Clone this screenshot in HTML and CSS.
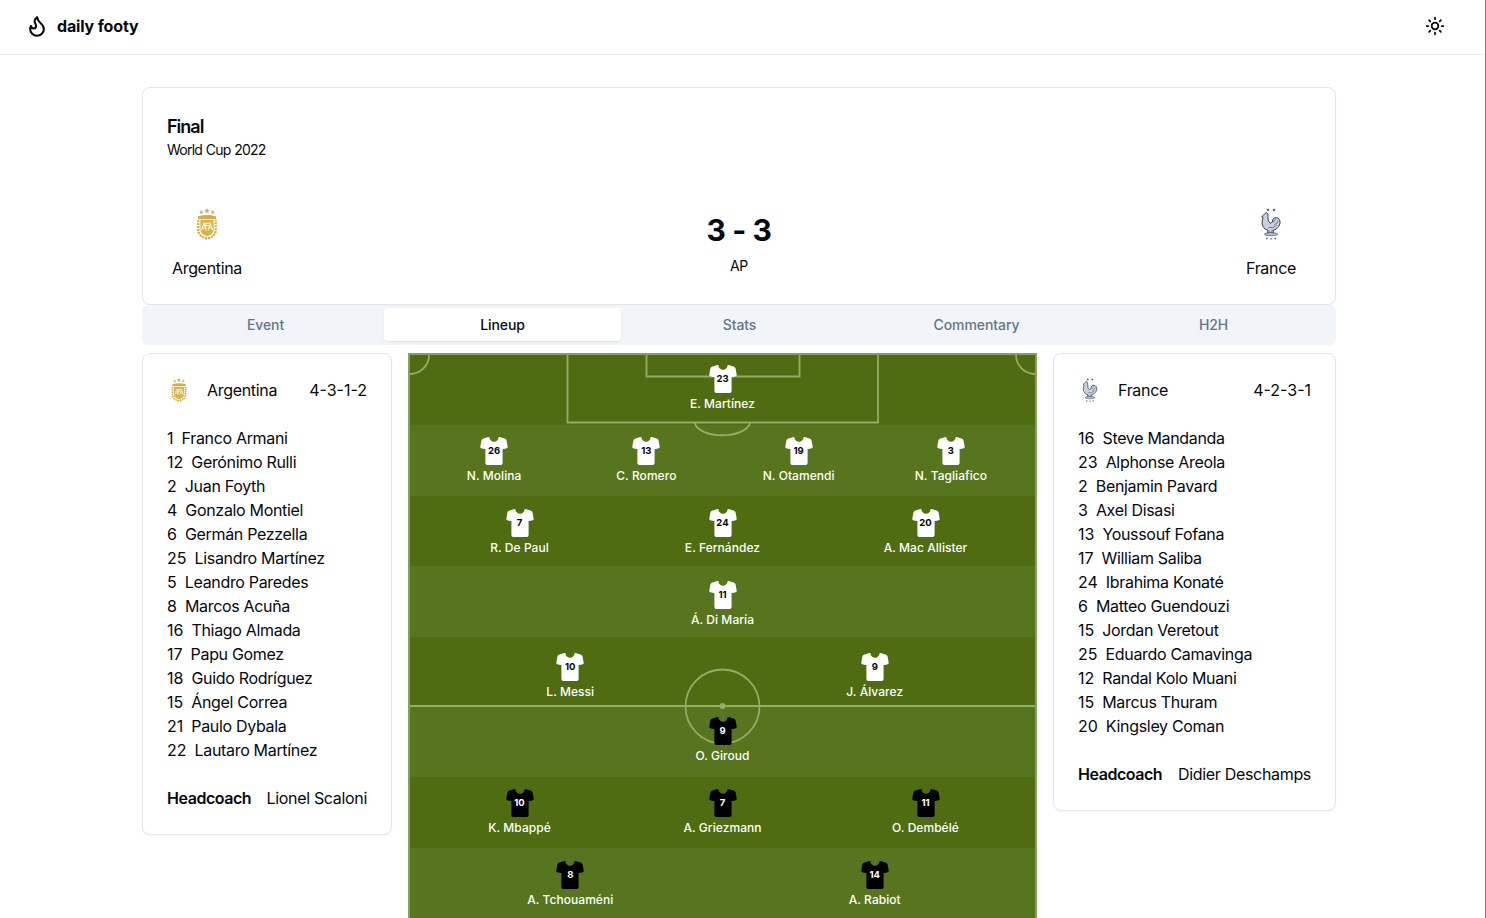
FILE: index.html
```html
<!DOCTYPE html>
<html lang="en">
<head>
<meta charset="utf-8">
<title>daily footy</title>
<link rel="stylesheet" href="styles.css">
</head>
<body>
<svg class="sprite" width="0" height="0">
  <symbol id="shirt" viewBox="0 0 28 28">
    <path d="M7.6 0.3 9.300 0C9.600 1.700 9.800 2.400 10.900 3.500 12.600 5.200 15.400 5.200 17.100 3.500 18.200 2.400 18.400 1.700 18.700 0L20.400 0.300 25.200 1.800Q26.200 2.200 26.600 3.600L27.700 9.800Q27.800 10.900 26.800 11.200L23.600 12.100 22.600 11.700V26Q22.600 28 20.600 28H7.400Q5.400 28 5.400 26V11.700L4.400 12.100 1.200 11.200Q0.200 10.900 0.300 9.800L1.400 3.600Q1.800 2.200 2.800 1.800Z"/>
  </symbol>
  <symbol id="afa" viewBox="0 0 32 32">
    <g fill="#d3ad45">
      <path d="M16 0l.8 1.7 1.9.2-1.4 1.3.4 1.9L16 4.2l-1.7.9.4-1.9-1.4-1.3 1.9-.2zM10.3 2l.6 1.3 1.5.2-1.1 1 .3 1.5-1.3-.7L9 6l.3-1.5-1.1-1 1.5-.2zM21.7 2l.6 1.3 1.5.2-1.1 1 .3 1.5-1.3-.7-1.3.7.3-1.5-1.1-1 1.5-.2z"/>
      <path d="M7 8.2Q16 5.6 25 8.2V11H7z"/>
    </g>
    <path d="M7.3 12V23Q8 28.4 16 30.6 24 28.4 24.7 23V12" fill="none" stroke="#d3ad45" stroke-width="2.3" stroke-dasharray="2.1 .9"/>
    <path d="M9.4 12H22.6V22.5Q22 26.5 16 28.2 10 26.5 9.4 22.5Z" fill="#d8b24b"/>
    <path d="M10.4 22.3 13 15.2 15.2 22.3M11.4 20H14.6M14.8 15V19.8M14.8 15.2H18.6M15 17.5H17.5M17 22.3 19.2 15.2 21.6 22.3M18 20H21" fill="none" stroke="#fff8df" stroke-width="1.1"/>
  </symbol>
  <symbol id="fff" viewBox="0 0 32 32">
    <path d="M13 .2l.5 1 1.1.1-.8.8.2 1.1-1-.5-1 .5.2-1.1-.8-.8 1.1-.1zM19 .2l.5 1 1.1.1-.8.8.2 1.1-1-.5-1 .5.2-1.1-.8-.8 1.1-.1z" fill="#36457a"/>
    <path d="M9.6 5.8 8.3 7.4 6.7 8.7 8.2 9.6 7.4 12.2Q6.4 15 7.8 18.2 9.7 21.8 13 22.3L12.4 25.2H18.6L17.9 22.4Q21.8 21.5 23.8 18.4 26 14.8 24.7 12 23 8.9 19.8 9.7 17 10.7 17.4 14L15.2 15.4Q12.6 13.2 13 9.5L12.8 6.2 11.4 4.4Z" fill="#cbd1dc" stroke="#34415f" stroke-width="1"/>
    <path d="M18.2 14.7Q18.6 11.8 21 11.5M19.4 16.7Q22.5 15.5 23 12.8M13.4 19.6Q18.5 20.800 21.8 17M14.2 22.6V25M16.8 22.6V25" fill="none" stroke="#66728d" stroke-width=".9"/>
    <ellipse cx="16" cy="26.2" rx="6.8" ry="1.5" fill="#b7c0cd" stroke="#4b5870" stroke-width=".7"/>
    <path d="M11 30.500h1.500M15.300 30.900H16.800M19.500 30.500h1.500" stroke="#536083" stroke-width="1.4"/>
  </symbol>
</svg>

<header class="topbar">
  <a class="brand">
    <svg class="flame" viewBox="0 0 24 24"><path d="M8.5 14.5A2.5 2.5 0 0 0 11 12c0-1.38-.5-2-1-3-1.072-2.143-.224-4.054 2-6 .5 2.5 2 4.9 4 6.5 2 1.6 3 3.5 3 5.5a7 7 0 1 1-14 0c0-1.153.433-2.294 1-3a2.5 2.5 0 0 0 2.5 2.5z"/></svg>
    <span>daily footy</span>
  </a>
  <svg class="sun" viewBox="0 0 24 24"><circle cx="12" cy="12" r="4"/><path d="M12 2v2M12 20v2M4.93 4.93l1.41 1.41M17.66 17.66l1.41 1.41M2 12h2M20 12h2M6.34 17.66l-1.41 1.41M19.07 4.93l-1.41 1.41"/></svg>
</header>

<main class="page">
  <section class="card match">
    <h1 class="round">Final</h1>
    <p class="league">World Cup 2022</p>
    <div class="scoreline">
      <div class="team"><svg class="crest"><use href="#afa"/></svg><span>Argentina</span></div>
      <div class="result"><strong class="score">3 - 3</strong><span class="status">AP</span></div>
      <div class="team"><svg class="crest"><use href="#fff"/></svg><span>France</span></div>
    </div>
  </section>

  <nav class="tabs">
    <a class="tab">Event</a><a class="tab active">Lineup</a><a class="tab">Stats</a><a class="tab">Commentary</a><a class="tab">H2H</a>
  </nav>

  <div class="columns">
    <aside class="card squad">
      <div class="squad-head"><svg class="mini"><use href="#afa"/></svg><span>Argentina</span><span class="formation">4-3-1-2</span></div>
      <ul class="bench">
        <li><span>1</span><span>Franco Armani</span></li>
        <li><span>12</span><span>Gerónimo Rulli</span></li>
        <li><span>2</span><span>Juan Foyth</span></li>
        <li><span>4</span><span>Gonzalo Montiel</span></li>
        <li><span>6</span><span>Germán Pezzella</span></li>
        <li><span>25</span><span>Lisandro Martínez</span></li>
        <li><span>5</span><span>Leandro Paredes</span></li>
        <li><span>8</span><span>Marcos Acuña</span></li>
        <li><span>16</span><span>Thiago Almada</span></li>
        <li><span>17</span><span>Papu Gomez</span></li>
        <li><span>18</span><span>Guido Rodríguez</span></li>
        <li><span>15</span><span>Ángel Correa</span></li>
        <li><span>21</span><span>Paulo Dybala</span></li>
        <li><span>22</span><span>Lautaro Martínez</span></li>
      </ul>
      <div class="coach"><b>Headcoach</b><span>Lionel Scaloni</span></div>
    </aside>

    <section class="pitch">
      <svg class="markings" viewBox="0 0 625 704">
        <path d="M157.500 0V67.500H468V0M236.500 0V21.500H389.500V0M284.500 67.500C289 84.500 335 84.500 340.500 67.500M0 19A19 19 0 0 0 19 0M606 0A19 19 0 0 0 625 19M0 351H625"/>
        <circle cx="312.500" cy="351.500" r="37"/>
        <circle class="spot" cx="312.500" cy="351" r="3"/>
      </svg>
      <div class="half light-kit">
        <div class="line">
          <div class="player"><div class="kit"><svg><use href="#shirt"/></svg><b>23</b></div><span>E. Martínez</span></div>
        </div>
        <div class="line">
          <div class="player"><div class="kit"><svg><use href="#shirt"/></svg><b>26</b></div><span>N. Molina</span></div>
          <div class="player"><div class="kit"><svg><use href="#shirt"/></svg><b>13</b></div><span>C. Romero</span></div>
          <div class="player"><div class="kit"><svg><use href="#shirt"/></svg><b>19</b></div><span>N. Otamendi</span></div>
          <div class="player"><div class="kit"><svg><use href="#shirt"/></svg><b>3</b></div><span>N. Tagliafico</span></div>
        </div>
        <div class="line">
          <div class="player"><div class="kit"><svg><use href="#shirt"/></svg><b>7</b></div><span>R. De Paul</span></div>
          <div class="player"><div class="kit"><svg><use href="#shirt"/></svg><b>24</b></div><span>E. Fernández</span></div>
          <div class="player"><div class="kit"><svg><use href="#shirt"/></svg><b>20</b></div><span>A. Mac Allister</span></div>
        </div>
        <div class="line">
          <div class="player"><div class="kit"><svg><use href="#shirt"/></svg><b>11</b></div><span>Á. Di María</span></div>
        </div>
        <div class="line">
          <div class="player"><div class="kit"><svg><use href="#shirt"/></svg><b>10</b></div><span>L. Messi</span></div>
          <div class="player"><div class="kit"><svg><use href="#shirt"/></svg><b>9</b></div><span>J. Álvarez</span></div>
        </div>
      </div>
      <div class="half dark-kit">
        <div class="line">
          <div class="player"><div class="kit"><svg><use href="#shirt"/></svg><b>9</b></div><span>O. Giroud</span></div>
        </div>
        <div class="line">
          <div class="player"><div class="kit"><svg><use href="#shirt"/></svg><b>10</b></div><span>K. Mbappé</span></div>
          <div class="player"><div class="kit"><svg><use href="#shirt"/></svg><b>7</b></div><span>A. Griezmann</span></div>
          <div class="player"><div class="kit"><svg><use href="#shirt"/></svg><b>11</b></div><span>O. Dembélé</span></div>
        </div>
        <div class="line">
          <div class="player"><div class="kit"><svg><use href="#shirt"/></svg><b>8</b></div><span>A. Tchouaméni</span></div>
          <div class="player"><div class="kit"><svg><use href="#shirt"/></svg><b>14</b></div><span>A. Rabiot</span></div>
        </div>
      </div>
    </section>

    <aside class="card squad">
      <div class="squad-head"><svg class="mini"><use href="#fff"/></svg><span>France</span><span class="formation">4-2-3-1</span></div>
      <ul class="bench">
        <li><span>16</span><span>Steve Mandanda</span></li>
        <li><span>23</span><span>Alphonse Areola</span></li>
        <li><span>2</span><span>Benjamin Pavard</span></li>
        <li><span>3</span><span>Axel Disasi</span></li>
        <li><span>13</span><span>Youssouf Fofana</span></li>
        <li><span>17</span><span>William Saliba</span></li>
        <li><span>24</span><span>Ibrahima Konaté</span></li>
        <li><span>6</span><span>Matteo Guendouzi</span></li>
        <li><span>15</span><span>Jordan Veretout</span></li>
        <li><span>25</span><span>Eduardo Camavinga</span></li>
        <li><span>12</span><span>Randal Kolo Muani</span></li>
        <li><span>15</span><span>Marcus Thuram</span></li>
        <li><span>20</span><span>Kingsley Coman</span></li>
      </ul>
      <div class="coach"><b>Headcoach</b><span>Didier Deschamps</span></div>
    </aside>
  </div>
</main>
</body>
</html>
```

FILE: styles.css
```css
* { box-sizing: border-box; }

body {
  margin: 0;
  height: 918px;
  overflow: hidden;
  border-right: 1px solid #77777e;
  background: #fff;
  color: #06080f;
  font: 16px/24px Inter, "Liberation Sans", sans-serif;
  letter-spacing: -0.32px;
}

.sprite { display: block; }

.topbar {
  height: 55px;
  padding: 0 40px 2px 26px;
  display: flex;
  align-items: center;
  justify-content: space-between;
  border-bottom: 1px solid #e9ecef;
}

.brand { display: flex; align-items: center; gap: 9px; font-weight: 700; letter-spacing: -0.15px; }
.flame, .sun { fill: none; stroke: currentColor; stroke-width: 2.1; stroke-linecap: round; stroke-linejoin: round; }
.flame { width: 22px; height: 26px; }
.flame path { transform: scale(1.07); transform-origin: 12px 12px; }
.sun { width: 20px; height: 20px; }

.page { width: 1194px; margin: 32px 0 0 142px; }

.card {
  border: 1px solid #e2e5ea;
  border-radius: 8px;
  background: #fff;
  box-shadow: 0 1px 2px rgba(0, 0, 0, 0.04);
}

.match { height: 218px; padding: 24px; }
.round { margin: 3px 0 0; font-size: 18px; line-height: 24px; font-weight: 600; letter-spacing: -1px; }
.league { margin: 1px 0 0; font-size: 14px; line-height: 20px; letter-spacing: -0.77px; word-spacing: 0.5px; }

.scoreline { display: grid; grid-template-columns: 80px 1fr 80px; margin-top: 48px; }
.team { display: flex; flex-direction: column; align-items: center; gap: 16px; }
.crest { width: 32px; height: 32px; }
.result { display: flex; flex-direction: column; align-items: center; }
.score { font-size: 30px; line-height: 36px; font-weight: 700; letter-spacing: -0.4px; margin-top: 4px; }
.status { font-size: 14px; line-height: 20px; margin-top: 8px; }

.tabs {
  height: 40px;
  padding: 3px 4px 4px 5px;
  display: grid;
  grid-template-columns: repeat(5, 1fr);
  border-radius: 6px;
  background: #f1f5f9;
}
.tab { display: grid; place-items: center; color: #64748b; font-size: 14px; font-weight: 500; letter-spacing: -0.08px; }
.active { background: #fff; color: #06080f; border-radius: 4px; box-shadow: 0 1px 2px rgba(0, 0, 0, 0.08); }

.columns { display: grid; grid-template-columns: 250px 629px 283px; gap: 16px; align-items: start; margin-top: 8px; }

.squad { display: flex; flex-direction: column; gap: 24px; padding: 24px; }
.squad-head { display: flex; align-items: center; gap: 16px; }
.mini { width: 24px; height: 24px; }
.formation { margin-left: auto; letter-spacing: 0; }
.bench { list-style: none; margin: 0; padding: 0; }
.bench li, .coach { display: flex; gap: 8px; }
.bench li span:first-child { letter-spacing: 0; }
.coach { justify-content: space-between; white-space: nowrap; }
.coach b { font-weight: 600; letter-spacing: -0.45px; }

.pitch {
  position: relative;
  height: 708px;
  padding: 6px 8px;
  display: flex;
  flex-direction: column;
  gap: 8px;
  border: 2px solid #84a160;
  background: repeating-linear-gradient(#4f6c13 0 70.4px, #57741e 70.4px 140.8px);
}
.markings { position: absolute; top: 0; left: 0; width: 625px; height: 704px; fill: none; stroke: #92ae68; stroke-width: 1.8; }
.spot { fill: #92ae68; stroke: none; }

.half { position: relative; display: flex; flex-direction: column; gap: 16px; }
.line { display: flex; height: 56px; }
.player { flex: 1; display: flex; flex-direction: column; align-items: center; gap: 1px; padding-top: 4px; color: #fff; font-size: 12px; line-height: 20px; font-weight: 500; letter-spacing: 0.05px; }
.kit { display: grid; place-items: center; width: 28px; height: 28px; }
.kit > * { grid-area: 1 / 1; }
.kit svg { width: 28px; height: 28px; }
.kit b { position: relative; font-size: 9.500px; line-height: 28px; font-weight: 700; letter-spacing: 0; }
.light-kit .kit { fill: #fff; color: #05070c; }
.dark-kit .kit { fill: #000; color: #fff; }
```
